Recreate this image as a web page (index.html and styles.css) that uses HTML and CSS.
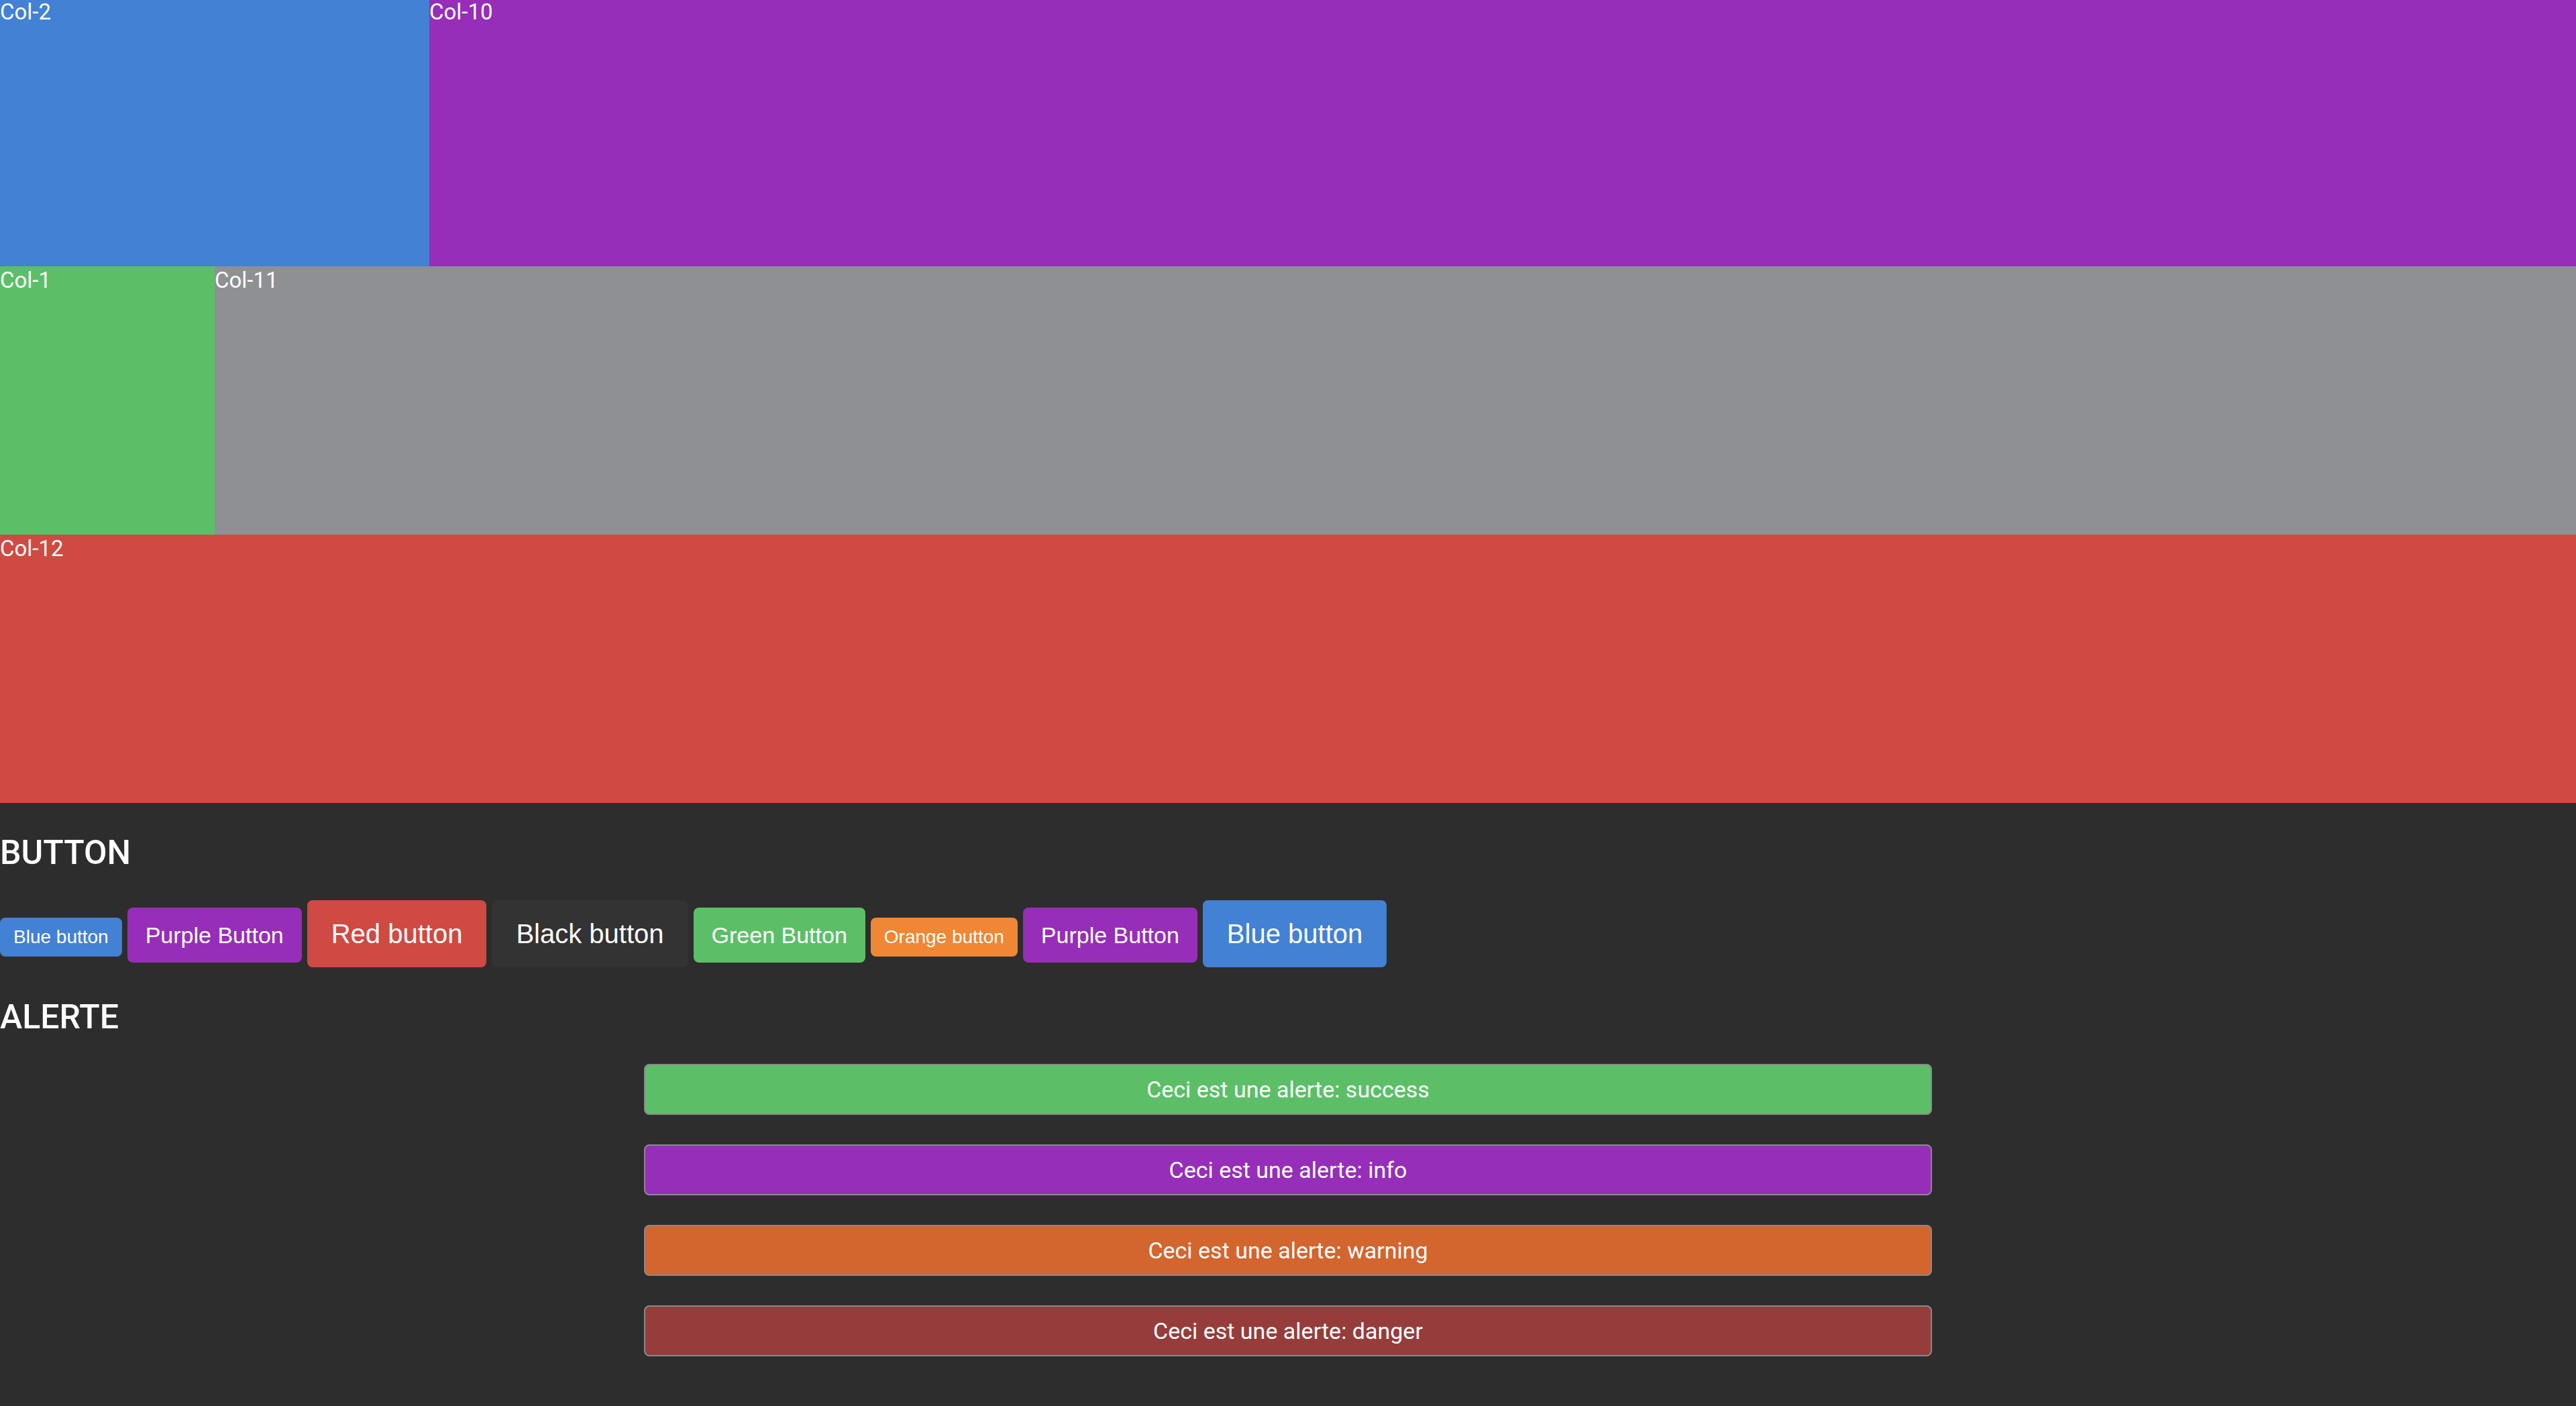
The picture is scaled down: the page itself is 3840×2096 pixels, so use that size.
FILE: index.html
```html
<!DOCTYPE html>
<html lang="fr">
<head>
<meta charset="utf-8">
<title>Grille, boutons et alertes</title>
<link rel="stylesheet" href="styles.css">
</head>
<body>
<div class="grid">
  <div class="row">
    <div class="col col-2 bg-blue">Col-2</div>
    <div class="col col-10 bg-purple">Col-10</div>
  </div>
  <div class="row">
    <div class="col col-1 bg-green">Col-1</div>
    <div class="col col-11 bg-gray">Col-11</div>
  </div>
  <div class="row">
    <div class="col col-12 bg-red">Col-12</div>
  </div>
</div>

<h2 class="section-title title-button">BUTTON</h2>
<div class="buttons">
  <button class="btn btn-sm btn-blue">Blue button</button>
  <button class="btn btn-md btn-purple">Purple Button</button>
  <button class="btn btn-lg btn-red">Red button</button>
  <button class="btn btn-lg btn-black">Black button</button>
  <button class="btn btn-md btn-green">Green Button</button>
  <button class="btn btn-sm btn-orange">Orange button</button>
  <button class="btn btn-md btn-purple">Purple Button</button>
  <button class="btn btn-lg btn-blue">Blue button</button>
</div>

<h2 class="section-title title-alert">ALERTE</h2>
<div class="alerts">
  <div class="alert alert-success">Ceci est une alerte: success</div>
  <div class="alert alert-info">Ceci est une alerte: info</div>
  <div class="alert alert-warning">Ceci est une alerte: warning</div>
  <div class="alert alert-danger">Ceci est une alerte: danger</div>
</div>
</body>
</html>
```
FILE: styles.css
```css
html, body {
  margin: 0;
  padding: 0;
}

body {
  background: #2d2d2d;
  color: #ffffff;
  font-family: Roboto, "Liberation Sans", sans-serif;
}

.grid {
  margin-top: -3px;
  display: flex;
  flex-direction: column;
}

.row {
  display: flex;
  height: 400px;
}

.col {
  font-family: Roboto, sans-serif;
  font-size: 33px;
  line-height: 39px;
  padding-top: 1px;
  color: #ffffff;
  box-sizing: border-box;
}

.col-1 { width: calc(100% / 12); }
.col-2 { width: calc(100% / 6); }
.col-10 { width: calc(100% * 10 / 12); }
.col-11 { width: calc(100% * 11 / 12); }
.col-12 { width: 100%; }

.bg-blue { background: #4281d3; }
.bg-purple { background: #962eb9; }
.bg-green { background: #5cbf67; }
.bg-gray { background: #8f9094; }
.bg-red { background: #cf4a43; }

.section-title {
  font-family: Roboto, sans-serif;
  font-weight: 500;
  font-size: 50px;
  line-height: 59px;
  margin: 0;
  color: #ffffff;
}

.title-button {
  margin-top: 45px;
}

.title-alert {
  margin-top: 45px;
}

.buttons {
  display: flex;
  align-items: baseline;
  gap: 8px;
  margin-top: 41px;
}

.btn {
  font-family: "Liberation Sans", Arial, sans-serif;
  color: #ffffff;
  border: none;
  border-radius: 8px;
  margin: 0;
  cursor: pointer;
}

.btn-sm {
  font-size: 28px;
  line-height: 32px;
  padding: 13px 20px;
}

.btn-md {
  font-size: 34px;
  line-height: 40px;
  padding: 21px 27px;
}

.btn-lg {
  font-size: 40px;
  line-height: 46px;
  padding: 27px 36px;
}

.btn-blue { background: #4281d3; }
.btn-purple { background: #962eb9; }
.btn-red { background: #cf4a43; }
.btn-black { background: #333333; }
.btn-green { background: #5cbf67; }
.btn-orange { background: #ef8734; }

.alerts {
  display: flex;
  flex-direction: column;
  align-items: center;
  gap: 44px;
  margin-top: 40px;
  padding-bottom: 74px;
}

.alert {
  width: 50%;
  box-sizing: border-box;
  height: 76px;
  border: 2px solid #8a8a8a;
  border-radius: 8px;
  display: flex;
  align-items: center;
  justify-content: center;
  font-family: Roboto, sans-serif;
  font-size: 34px;
  color: #ffffff;
}

.alert-success { background: #5cbf67; }
.alert-info { background: #962eb9; }
.alert-warning { background: #d3652f; }
.alert-danger { background: #963d3b; }
```
